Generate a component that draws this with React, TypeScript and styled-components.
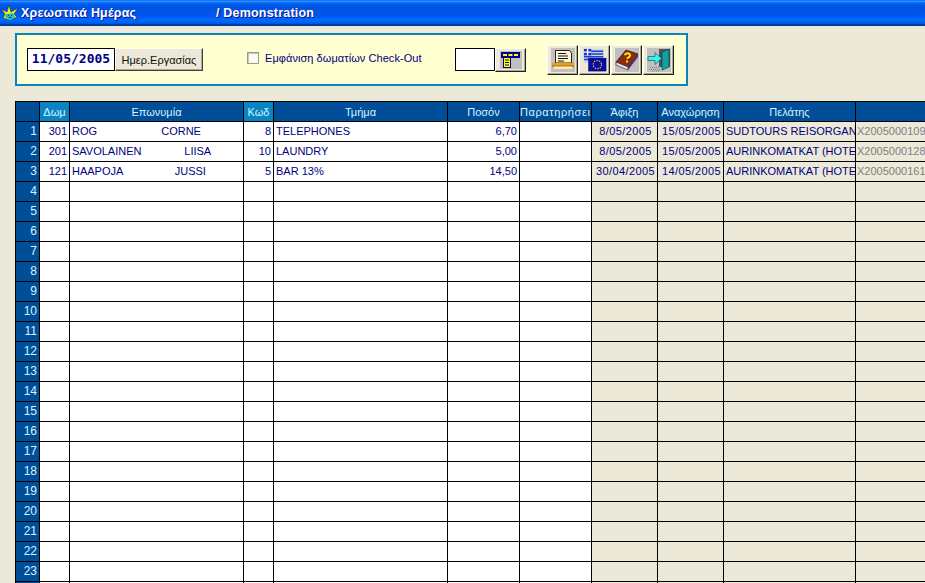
import styled, { createGlobalStyle } from 'styled-components'

const GlobalStyle = createGlobalStyle`
  html, body {
    margin: 0;
    padding: 0;
    background: #ece9d8;
    overflow: hidden;
  }
  * {
    box-sizing: border-box;
  }
`

type Align = 'left' | 'right' | 'center'

const columns = [
  { title: '', width: 24, align: 'right' as Align, shade: false },
  { title: 'Δωμ', width: 30, align: 'right' as Align, shade: false, accent: true },
  { title: 'Επωνυμία', width: 174, align: 'left' as Align, shade: false },
  { title: 'Κωδ', width: 30, align: 'right' as Align, shade: false, accent: true },
  { title: 'Τμήμα', width: 174, align: 'left' as Align, shade: false },
  { title: 'Ποσόν', width: 72, align: 'right' as Align, shade: false },
  { title: 'Παρατηρήσει', width: 72, align: 'left' as Align, shade: false, wide: true },
  { title: 'Άφιξη', width: 66, align: 'center' as Align, shade: true, spaced: true },
  { title: 'Αναχώρηση', width: 66, align: 'center' as Align, shade: true, spaced: true },
  { title: 'Πελάτης', width: 132, align: 'left' as Align, shade: true },
  { title: '', width: 132, align: 'left' as Align, shade: true, muted: true },
]

const data = [
  ['301', 'ROG                     CORNE', '8', 'TELEPHONES', '6,70', '', '8/05/2005', '15/05/2005', 'SUDTOURS REISORGAN', 'X2005000109'],
  ['201', 'SAVOLAINEN              LIISA', '10', 'LAUNDRY', '5,00', '', '8/05/2005', '15/05/2005', 'AURINKOMATKAT (HOTE', 'X2005000128'],
  ['121', 'HAAPOJA                 JUSSI', '5', 'BAR 13%', '14,50', '', '30/04/2005', '14/05/2005', 'AURINKOMATKAT (HOTE', 'X2005000161'],
]

const VISIBLE_NUMBERS = 23
const rows = Array.from({ length: 24 }, (_, i) => data[i] ?? Array(10).fill(''))

const Star = () => (
  <svg width="18" height="17" viewBox="0 0 18 17">
    <path d="M0 4 L6 7 L8 0 L10 7 L17 3 L13 9 L16 12 L9 15 L2 13 L4 9 Z" fill="#fbf400" stroke="#0a2a60" strokeWidth="0.5" />
    <path d="M5 9 L12 8 L14 12 L9 15 L4 12 Z" fill="#1cc0c0" />
    <path d="M7 10 h1 v1 h-1 Z M10 10 h1 v1 h-1 Z M8 12 h2 v1 h-2 Z" fill="#00305a" />
  </svg>
)

const ColumnsIcon = () => (
  <svg width="22" height="18" viewBox="0 0 22 18">
    <rect width="22" height="18" fill="#c0c0c0" />
    <rect x="1.500" y="1.500" width="18" height="5" fill="#0000a8" stroke="#00006a" />
    <rect x="3" y="3" width="4" height="2" fill="#ffff00" />
    <rect x="8.500" y="3" width="4" height="2" fill="#ffff00" />
    <rect x="14" y="3" width="4" height="2" fill="#ffff00" />
    <rect x="3.500" y="6.500" width="7" height="10" fill="#ffff00" stroke="#000080" />
    <path d="M5 9h4M5 11.500h4M5 14h4" stroke="#000080" />
  </svg>
)

const PrintIcon = () => (
  <svg width="24" height="24" viewBox="0 0 24 24">
    <rect width="24" height="24" fill="#c0c0c0" />
    <path d="M4.500 2.500h14l2 2.500v10h-16z" fill="#fff6d8" stroke="#302010" />
    <path d="M7 5.500h8M7 8h10M7 10.500h10M7 13h6" stroke="#101010" />
    <rect x="1" y="15" width="22" height="2.500" fill="#f5a000" />
    <rect x="1" y="17.500" width="22" height="1" fill="#905800" />
    <rect x="3" y="18.500" width="18" height="2.500" fill="#ffe8a8" />
  </svg>
)

const FlagsIcon = () => (
  <svg width="24" height="24" viewBox="0 0 26 26">
    <rect width="26" height="26" fill="#ece9d8" />
    <rect x="1" y="1" width="21" height="15" fill="#c8d4f0" />
    <path d="M9 3.500h13M9 6.500h13M1 9.500h21M1 12.500h21" stroke="#2040c0" strokeWidth="1.500" />
    <rect x="1" y="1" width="8" height="7" fill="#1c30c8" />
    <path d="M5 1v7M1 4.500h8" stroke="#ffffff" strokeWidth="1.500" />
    <rect x="6" y="11" width="19" height="14" fill="#0a0aa8" stroke="#000060" strokeWidth="0.500" />
    <circle cx="15.500" cy="18" r="4.500" fill="none" stroke="#ffe800" strokeWidth="1.200" strokeDasharray="1.500 1.300" />
  </svg>
)

const BookIcon = () => (
  <svg width="24" height="24" viewBox="0 0 24 24">
    <rect width="24" height="24" fill="#c0c0c0" />
    <path d="M1 14 L11 2 L23 6 L13 19 Z" fill="#8a2c10" stroke="#301008" strokeWidth="0.700" />
    <path d="M1 14 L13 19 L13 22 L1 17 Z" fill="#f2e8d8" stroke="#402060" strokeWidth="0.700" />
    <path d="M13 19 L23 6 L23 9 L13 22 Z" fill="#50287a" />
    <path d="M9.500 7 q3-3 5-1 q2 2-2 4 v1" fill="none" stroke="#ffee00" strokeWidth="1.800" />
    <rect x="11" y="12.500" width="2" height="2" fill="#ffee00" />
  </svg>
)

const ExitIcon = () => (
  <svg width="24" height="24" viewBox="0 0 24 24">
    <rect width="24" height="24" fill="#c0c0c0" />
    <path d="M12 1h11v18h-11z" fill="#505050" />
    <path d="M15 4 L22 1 V19 L15 22 Z" fill="#12a0a0" stroke="#004848" strokeWidth="0.700" />
    <path d="M1 8.500h7v-4l6.500 6-6.500 6v-4h-7z" fill="#40f0f0" stroke="#006868" strokeWidth="0.700" />
    <path d="M3 19.500h10M2 21.500h11M5 23h8" stroke="#808080" strokeDasharray="1 1" />
  </svg>
)

export default function App() {
  return (
    <>
      <GlobalStyle />
      <Page>
        <TitleBar>
          <Star />
          <TitleText>Χρεωστικά Ημέρας</TitleText>
          <TitleText>/ Demonstration</TitleText>
        </TitleBar>
        <ToolPanel>
          <DateGroup>
            <DateBox>11/05/2005</DateBox>
            <PlainButton>Ημερ.Εργασίας</PlainButton>
          </DateGroup>
          <CheckLabel>
            <CheckMark />
            Εμφάνιση δωματίων Check-Out
          </CheckLabel>
          <PickerGroup>
            <EmptyInput />
            <SmallIconButton>
              <ColumnsIcon />
            </SmallIconButton>
          </PickerGroup>
          <IconRow>
            <IconButton>
              <PrintIcon />
            </IconButton>
            <IconButton>
              <FlagsIcon />
            </IconButton>
            <IconButton>
              <BookIcon />
            </IconButton>
            <IconButton>
              <ExitIcon />
            </IconButton>
          </IconRow>
        </ToolPanel>
        <GridWrap>
          <Grid>
            <colgroup>
              {columns.map((c, i) => (
                <col key={i} style={{ width: c.width }} />
              ))}
            </colgroup>
            <thead>
              <tr>
                {columns.map((c, i) => (
                  <HeadCell key={i} $accent={!!c.accent} $wide={!!c.wide}>
                    {c.title}
                  </HeadCell>
                ))}
              </tr>
            </thead>
            <tbody>
              {rows.map((row, r) => (
                <tr key={r}>
                  <RowNumber>{r < VISIBLE_NUMBERS ? r + 1 : ''}</RowNumber>
                  {row.map((value: string, i: number) => {
                    const col = columns[i + 1]
                    return (
                      <Cell
                        key={i}
                        $align={col.align}
                        $shade={col.shade}
                        $muted={!!col.muted}
                        $spaced={!!col.spaced}
                      >
                        {value}
                      </Cell>
                    )
                  })}
                </tr>
              ))}
            </tbody>
          </Grid>
        </GridWrap>
      </Page>
    </>
  )
}

const Page = styled.div`
  width: 925px;
  height: 583px;
  overflow: hidden;
  background: #ece9d8;
  font-family: 'Liberation Sans', Arial, sans-serif;
`

const TitleBar = styled.div`
  height: 26px;
  display: flex;
  align-items: center;
  padding-left: 1px;
  background: linear-gradient(
    #0058ee 0%,
    #3593ff 4%,
    #288eff 6%,
    #127dff 8%,
    #036ffc 10%,
    #0262ee 14%,
    #0057e5 20%,
    #0054e3 24%,
    #0055eb 56%,
    #005bf5 66%,
    #026afe 76%,
    #0062ef 86%,
    #0052d6 92%,
    #0040ab 94%,
    #003092 100%
  );
`

const TitleText = styled.span`
  font-size: 12.5px;
  font-weight: bold;
  color: #ffffff;
  text-shadow: 1px 1px 0 #0f1089;
  letter-spacing: 0.2px;
  width: 195px;
  padding-left: 2px;
  white-space: pre;
`

const ToolPanel = styled.div`
  width: 673px;
  height: 53px;
  margin: 7px 0 0 15px;
  padding: 0 0 0 10px;
  display: flex;
  align-items: center;
  background: #ffffd2;
  border: 2px solid #0b84bd;
`

const DateGroup = styled.div`
  display: flex;
  height: 23px;
`

const DateBox = styled.div`
  width: 88px;
  border: 1px solid #000000;
  background: #ffffff;
  color: #000080;
  font-family: 'DejaVu Sans Mono', monospace;
  font-size: 13px;
  font-weight: bold;
  line-height: 20px;
  text-align: center;
`

const PlainButton = styled.button`
  width: 88px;
  padding: 0;
  background: #ece9d8;
  border: 1px solid;
  border-color: #fffef5 #404040 #404040 #fffef5;
  box-shadow: inset -1px -1px 0 #aca899;
  color: #101010;
  font-family: 'Liberation Sans', Arial, sans-serif;
  font-size: 11px;
`

const CheckLabel = styled.label`
  margin-left: 44px;
  width: 208px;
  display: flex;
  align-items: center;
  gap: 6px;
  color: #000080;
  font-size: 11px;
  letter-spacing: 0.06px;
  margin-top: -4px;
  white-space: nowrap;
`

const CheckMark = styled.span`
  width: 12px;
  height: 12px;
  flex: none;
  background: #fbfbf0;
  border: 1px solid #9a9a8c;
  box-shadow: inset 1px 1px 0 #c8c8bc;
`

const PickerGroup = styled.div`
  display: flex;
  align-items: center;
`

const EmptyInput = styled.div`
  width: 40px;
  height: 23px;
  background: #ffffff;
  border: 1px solid #000000;
`

const SmallIconButton = styled.button`
  width: 31px;
  height: 24px;
  padding: 0;
  display: flex;
  align-items: center;
  justify-content: center;
  background: #ece9d8;
  border: 1px solid;
  border-color: #fffef5 #202020 #202020 #fffef5;
  box-shadow: inset -1px -1px 0 #aca899;
`

const IconRow = styled.div`
  margin-left: 21px;
  display: flex;
  gap: 1px;
`

const IconButton = styled.button`
  width: 31px;
  height: 30px;
  padding: 0;
  display: flex;
  align-items: center;
  justify-content: center;
  background: #ece9d8;
  border: 1px solid;
  border-color: #fffef5 #202020 #202020 #fffef5;
  box-shadow: inset -1px -1px 0 #aca899;
`

const GridWrap = styled.div`
  margin: 15px 0 0 15px;
  border-top: 1px solid #000000;
  border-left: 1px solid #000000;
  width: 910px;
  overflow: hidden;
`

const Grid = styled.table`
  table-layout: fixed;
  width: 972px;
  border-collapse: separate;
  border-spacing: 0;
  font-size: 11px;
`

const HeadCell = styled.th<{ $accent: boolean; $wide: boolean }>`
  height: 20px;
  padding: 0;
  overflow: hidden;
  white-space: nowrap;
  font-weight: normal;
  text-align: ${(p) => (p.$wide ? 'left' : 'center')};
  letter-spacing: ${(p) => (p.$wide ? '0.6px' : '0')};
  color: #d4f4ff;
  background: ${(p) => (p.$accent ? '#0a84c0' : '#004e98')};
  border-right: 1px solid #000000;
  border-bottom: 1px solid #000000;
`

const RowNumber = styled.td`
  height: 20px;
  padding: 0 2px 2px 0;
  font-size: 12px;
  text-align: right;
  color: #d4f4ff;
  background: #004e98;
  border-right: 1px solid #000000;
  border-bottom: 1px solid #000000;
`

const Cell = styled.td<{ $align: Align; $shade: boolean; $muted: boolean; $spaced: boolean }>`
  height: 20px;
  padding: ${(p) => (p.$align === 'right' ? '0 2px 2px 0' : p.$muted ? '0 0 2px 1px' : '0 0 2px 2px')};
  overflow: hidden;
  white-space: pre;
  text-align: ${(p) => p.$align};
  letter-spacing: ${(p) => (p.$spaced ? '0.4px' : '0')};
  color: ${(p) => (p.$muted ? '#808080' : '#000080')};
  background: ${(p) => (p.$shade ? '#ece9d8' : '#ffffff')};
  border-right: 1px solid #000000;
  border-bottom: 1px solid #000000;
`
